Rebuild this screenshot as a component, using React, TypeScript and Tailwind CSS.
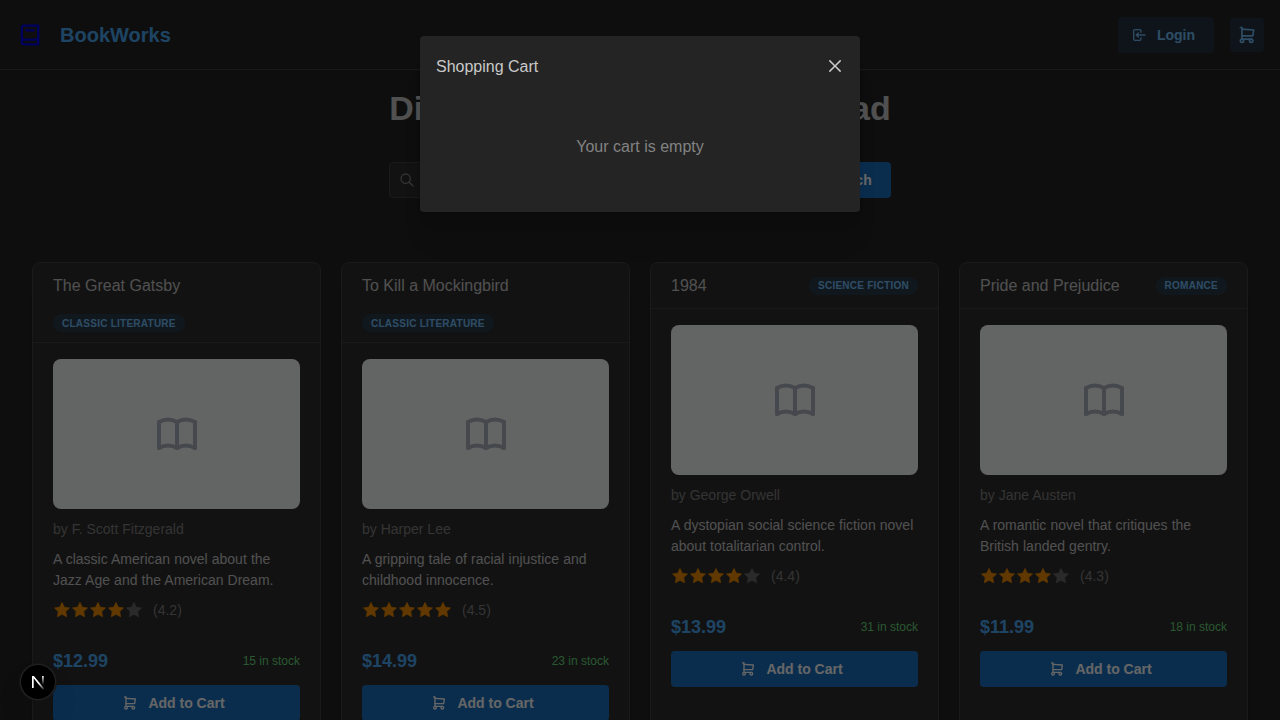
import type { ReactNode } from "react";

type Book = {
  title: string;
  genre: string;
  author: string;
  description: string;
  rating: number;
  price: string;
  stock: number;
};

const books: Book[] = [
  {
    title: "The Great Gatsby",
    genre: "Classic Literature",
    author: "F. Scott Fitzgerald",
    description: "A classic American novel about the Jazz Age and the American Dream.",
    rating: 4.2,
    price: "$12.99",
    stock: 15,
  },
  {
    title: "To Kill a Mockingbird",
    genre: "Classic Literature",
    author: "Harper Lee",
    description: "A gripping tale of racial injustice and childhood innocence.",
    rating: 4.5,
    price: "$14.99",
    stock: 23,
  },
  {
    title: "1984",
    genre: "Science Fiction",
    author: "George Orwell",
    description: "A dystopian social science fiction novel about totalitarian control.",
    rating: 4.4,
    price: "$13.99",
    stock: 31,
  },
  {
    title: "Pride and Prejudice",
    genre: "Romance",
    author: "Jane Austen",
    description: "A romantic novel that critiques the British landed gentry.",
    rating: 4.3,
    price: "$11.99",
    stock: 18,
  },
];

function Icon({ className, children }: { className: string; children: ReactNode }) {
  return (
    <svg
      viewBox="0 0 24 24"
      fill="none"
      stroke="currentColor"
      strokeWidth={2}
      strokeLinecap="round"
      strokeLinejoin="round"
      className={className}
    >
      {children}
    </svg>
  );
}

function CartIcon({ className }: { className: string }) {
  return (
    <Icon className={className}>
      <path d="M6 19m-2 0a2 2 0 1 0 4 0a2 2 0 1 0 -4 0" />
      <path d="M17 19m-2 0a2 2 0 1 0 4 0a2 2 0 1 0 -4 0" />
      <path d="M17 17h-11v-14h-2" />
      <path d="M6 5l14 1l-1 7h-13" />
    </Icon>
  );
}

function Star({ filled }: { filled: boolean }) {
  return (
    <svg
      viewBox="0 0 24 24"
      fill="currentColor"
      stroke="currentColor"
      strokeWidth={1}
      strokeLinejoin="round"
      className={filled ? "size-[18px] text-[#f08c00]" : "size-[18px] text-[#696969]"}
    >
      <path d="M12 17.75l-6.172 3.245l1.179 -6.873l-5 -4.867l6.9 -1l3.086 -6.253l3.086 6.253l6.9 1l-5 4.867l1.179 6.873z" />
    </svg>
  );
}

function Header() {
  return (
    <header className="flex h-[70px] shrink-0 items-center justify-between border-b border-[#424242] px-4">
      <div className="flex items-center gap-4">
        <Icon className="size-7 text-[#0000ee]">
          <path d="M19 4v16h-12a2 2 0 0 1 -2 -2v-12a2 2 0 0 1 2 -2h12z" />
          <path d="M19 16h-12a2 2 0 0 0 -2 2" />
          <path d="M9 8h6" />
        </Icon>
        <span className="text-xl font-bold text-[#4dabf7]">BookWorks</span>
      </div>
      <div className="flex items-center gap-4">
        <button className="flex h-9 items-center gap-2.5 rounded pr-[19px] pl-[13px] text-sm font-semibold text-[#74c0fc] bg-[#228be6]/15">
          <Icon className="size-4">
            <path d="M15 8v-2a2 2 0 0 0 -2 -2h-7a2 2 0 0 0 -2 2v12a2 2 0 0 0 2 2h7a2 2 0 0 0 2 -2v-2" />
            <path d="M21 12h-13l3 -3" />
            <path d="M11 15l-3 -3" />
          </Icon>
          Login
        </button>
        <button className="flex size-[34px] items-center justify-center rounded bg-[#228be6]/15 text-[#74c0fc]">
          <CartIcon className="size-5" />
        </button>
      </div>
    </header>
  );
}

function Hero() {
  return (
    <section className="mx-auto flex w-fit flex-col pt-4">
      <h1 className="text-[34px] leading-[44px] font-bold whitespace-nowrap">Discover Your Next Great Read</h1>
      <div className="mt-8 flex gap-4">
        <div className="flex h-9 flex-1 items-center gap-2.5 rounded border border-[#424242] bg-[#2e2e2e] pl-[9px] text-sm text-[#696969]">
          <Icon className="size-4 text-[#828282]">
            <path d="M10 10m-7 0a7 7 0 1 0 14 0a7 7 0 1 0 -14 0" />
            <path d="M21 21l-6 -6" />
          </Icon>
          Search books
        </div>
        <button className="h-9 rounded bg-[#1971c2] px-[19px] text-sm font-semibold text-white">Search</button>
      </div>
    </section>
  );
}

function BookCard({ book }: { book: Book }) {
  return (
    <article className="flex h-[520px] flex-col rounded-lg border border-[#424242] bg-[#2e2e2e] shadow-[0_1px_3px_rgba(0,0,0,0.05),0_28px_23px_-7px_rgba(0,0,0,0.05),0_12px_12px_-7px_rgba(0,0,0,0.04)]">
      <div className="flex flex-wrap items-center justify-between gap-4 border-b border-[#424242] px-5 py-[10px]">
        <h2 className="text-base leading-[25px]">{book.title}</h2>
        <span className="flex h-[18px] items-center rounded-full bg-[#228be6]/15 px-[9px] text-[10px] font-bold tracking-[0.25px] text-[#74c0fc] uppercase">
          {book.genre}
        </span>
      </div>
      <div className="flex flex-col px-5 pt-4">
        <div className="flex h-[150px] items-center justify-center rounded-lg bg-[#f8f9fa]">
          <Icon className="size-12 text-[#adb5bd]">
            <path d="M3 19a9 9 0 0 1 9 0a9 9 0 0 1 9 0" />
            <path d="M3 6a9 9 0 0 1 9 0a9 9 0 0 1 9 0" />
            <path d="M3 6l0 13" />
            <path d="M12 6l0 13" />
            <path d="M21 6l0 13" />
          </Icon>
        </div>
        <p className="mt-[9px] text-sm leading-[22px] text-[#828282]">by {book.author}</p>
        <p className="mt-[9px] text-sm leading-[21px] [word-spacing:0.2px]">{book.description}</p>
        <div className="mt-2 flex h-[22px] items-center">
          {[1, 2, 3, 4, 5].map((n) => (
            <Star key={n} filled={n <= Math.round(book.rating)} />
          ))}
          <span className="ml-[10px] text-sm text-[#828282]">({book.rating})</span>
        </div>
        <div className="mt-[26px] flex h-7 items-center justify-between">
          <span className="text-lg font-bold text-[#4dabf7]">{book.price}</span>
          <span className="text-xs text-[#69db7c]">{book.stock} in stock</span>
        </div>
        <button className="mt-[10px] flex h-9 items-center justify-center gap-2.5 rounded bg-[#1971c2] pr-[19px] pl-[13px] text-sm font-semibold text-white">
          <CartIcon className="size-4" />
          Add to Cart
        </button>
      </div>
    </article>
  );
}

function CartModal() {
  return (
    <div className="absolute inset-0 flex items-start justify-center bg-black/60 pt-9">
      <div
        role="dialog"
        className="flex h-44 w-[440px] flex-col rounded bg-[#242424] shadow-[0_1px_3px_rgba(0,0,0,0.05),0_36px_28px_-7px_rgba(0,0,0,0.05),0_17px_17px_-7px_rgba(0,0,0,0.04)]"
      >
        <div className="flex h-[60px] items-center justify-between pr-[11px] pl-4">
          <h2 className="pt-0.5 text-base">Shopping Cart</h2>
          <button aria-label="Close" className="flex size-7 items-center justify-center">
            <svg viewBox="0 0 15 15" fill="currentColor" className="size-5">
              <path d="M11.7816 4.03157C12.0062 3.80702 12.0062 3.44295 11.7816 3.2184C11.5571 2.99385 11.193 2.99385 10.9685 3.2184L7.50005 6.68682L4.03164 3.2184C3.80708 2.99385 3.44301 2.99385 3.21846 3.2184C2.99391 3.44295 2.99391 3.80702 3.21846 4.03157L6.68688 7.49999L3.21846 10.9684C2.99391 11.193 2.99391 11.557 3.21846 11.7816C3.44301 12.0061 3.80708 12.0061 4.03164 11.7816L7.50005 8.31316L10.9685 11.7816C11.193 12.0061 11.5571 12.0061 11.7816 11.7816C12.0062 11.557 12.0062 11.193 11.7816 10.9684L8.31322 7.49999L11.7816 4.03157Z" />
            </svg>
          </button>
        </div>
        <p className="mt-[39px] text-center text-base text-[#828282]">Your cart is empty</p>
      </div>
    </div>
  );
}

function DevBadge() {
  return (
    <div className="absolute bottom-5 left-5 flex size-9 items-center justify-center rounded-full bg-black shadow-[0_0_0_1px_#171717,inset_0_0_0_1px_rgba(255,255,255,0.14),0_16px_32px_-8px_rgba(0,0,0,0.24)]">
      <svg viewBox="0 0 36 36" className="size-9">
        <defs>
          <linearGradient id="stem" x1="0" y1="12" x2="0" y2="21" gradientUnits="userSpaceOnUse">
            <stop stopColor="#fff" />
            <stop offset="1" stopColor="#fff" stopOpacity="0" />
          </linearGradient>
          <linearGradient id="diagonal" x1="19" y1="19" x2="24" y2="25.5" gradientUnits="userSpaceOnUse">
            <stop stopColor="#fff" />
            <stop offset="1" stopColor="#fff" stopOpacity="0.1" />
          </linearGradient>
        </defs>
        <path d="M12 12h1.9L24.2 24.6L22.9 25.7L13.7 14.3V24H12z" fill="url(#diagonal)" />
        <path d="M22.1 12h1.6v9h-1.6z" fill="url(#stem)" />
      </svg>
    </div>
  );
}

export default function App() {
  return (
    <div className="relative flex h-screen flex-col overflow-hidden bg-[#242424] font-['Liberation_Sans',Arial,sans-serif] text-[#c9c9c9]">
      <Header />
      <main className="min-h-0 flex-1 overflow-hidden">
        <Hero />
        <div className="mt-16 grid grid-cols-4 gap-5 px-8">
          {books.map((book) => (
            <BookCard key={book.title} book={book} />
          ))}
        </div>
      </main>
      <CartModal />
      <DevBadge />
    </div>
  );
}
